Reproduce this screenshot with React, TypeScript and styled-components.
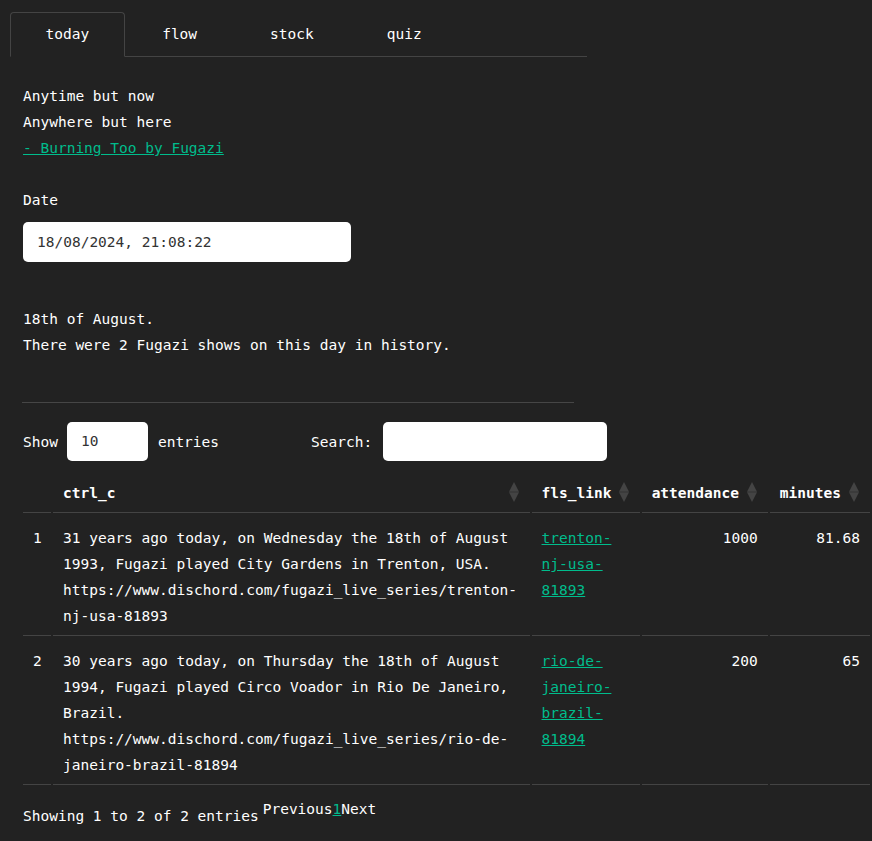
import styled, { createGlobalStyle } from "styled-components";

const GlobalStyle = createGlobalStyle`
  html, body {
    margin: 0;
    background: #222222;
    overflow-x: hidden;
  }
  body {
    font-family: "DejaVu Sans Mono", "Liberation Mono", monospace;
    font-size: 14.5px;
    line-height: 26px;
    color: #ffffff;
  }
`;

const Page = styled.div`
  padding: 12px 0 40px 10px;
`;

const TabBar = styled.ul`
  display: flex;
  width: 577px;
  margin: 0;
  padding: 0;
  list-style: none;
  border-bottom: 1px solid #444444;
`;

const Tab = styled.li<{ $active?: boolean }>`
  margin: 0 2px -1px 0;
  padding: 8px 34.5px 9px;
  border: 1px solid ${(p) => (p.$active ? "#444444" : "transparent")};
  border-bottom-color: transparent;
  border-radius: 4px 4px 0 0;
  background: ${(p) => (p.$active ? "#222222" : "transparent")};
  color: #ffffff;
  cursor: pointer;
`;

const Panel = styled.div`
  padding-left: 13px;
`;

const Quote = styled.p`
  margin: 26px 0 0;
`;

const Link = styled.a`
  color: #00bc8c;
  text-decoration: underline;
`;

const Label = styled.div`
  margin-top: 26px;
`;

const DateInput = styled.div`
  box-sizing: border-box;
  width: 328px;
  height: 40px;
  margin-top: 9px;
  padding: 7px 14px;
  background: #ffffff;
  border-radius: 5px;
  color: #333333;
`;

const Summary = styled.p`
  margin: 44px 0 0;
`;

const Rule = styled.hr`
  width: 552px;
  margin: 44px 0 0 -1px;
  border: 0;
  border-top: 1px solid #464646;
`;

const Controls = styled.div`
  display: flex;
  align-items: center;
  margin-top: 19px;
  height: 39px;
`;

const Box = styled.div<{ $width: number }>`
  box-sizing: border-box;
  width: ${(p) => p.$width}px;
  height: 39px;
  padding: 6px 14px;
  background: #ffffff;
  border-radius: 5px;
  color: #333333;
`;

const Gap = styled.span<{ $w: number }>`
  display: inline-block;
  width: ${(p) => p.$w}px;
`;

const Table = styled.table`
  margin-top: 17px;
  margin-left: -2px;
  border-spacing: 2px;
  table-layout: fixed;
  width: 913px;
`;

const Th = styled.th<{ $align?: string }>`
  position: relative;
  padding: 0 10px 6px;
  text-align: ${(p) => p.$align || "left"};
  font-weight: bold;
  border-bottom: 1px solid #444444;
`;

const Td = styled.td<{ $align?: string }>`
  padding: 10px 10px 6px;
  vertical-align: top;
  text-align: ${(p) => p.$align || "left"};
  border-bottom: 1px solid #444444;
`;

const SortIcon = styled.svg`
  position: absolute;
  right: 11px;
  top: 2px;
  width: 10px;
  height: 20px;
`;

const Footer = styled.div`
  display: flex;
  align-items: flex-start;
  gap: 4px;
  margin-top: 9px;
`;

const Info = styled.div`
  padding-top: 7px;
`;

const Pager = styled.div`
  display: flex;
`;

function Sort() {
  return (
    <SortIcon viewBox="0 0 10 20">
      <polygon points="5,0 10,9.8 0,9.8" fill="#444444" />
      <polygon points="0,10.2 10,10.2 5,20" fill="#444444" />
    </SortIcon>
  );
}

const shows = [
  {
    n: 1,
    text: "31 years ago today, on Wednesday the 18th of August 1993, Fugazi played City Gardens in Trenton, USA. https://www.dischord.com/fugazi_live_series/trenton-nj-usa-81893",
    link: "trenton-nj-usa-81893",
    attendance: "1000",
    minutes: "81.68",
  },
  {
    n: 2,
    text: "30 years ago today, on Thursday the 18th of August 1994, Fugazi played Circo Voador in Rio De Janeiro, Brazil. https://www.dischord.com/fugazi_live_series/rio-de-janeiro-brazil-81894",
    link: "rio-de-janeiro-brazil-81894",
    attendance: "200",
    minutes: "65",
  },
];

export default function App() {
  return (
    <Page>
      <GlobalStyle />
      <TabBar>
        <Tab $active>today</Tab>
        <Tab>flow</Tab>
        <Tab>stock</Tab>
        <Tab>quiz</Tab>
      </TabBar>

      <Panel>
        <Quote>
          Anytime but now
          <br />
          Anywhere but here
          <br />
          <Link href="#">- Burning Too by Fugazi</Link>
        </Quote>

        <Label>Date</Label>
        <DateInput>18/08/2024, 21:08:22</DateInput>

        <Summary>
          18th of August.
          <br />
          There were 2 Fugazi shows on this day in history.
        </Summary>

        <Rule />

        <Controls>
          <span>Show</span>
          <Gap $w={9} />
          <Box $width={81}>10</Box>
          <Gap $w={10} />
          <span>entries</span>
          <Gap $w={92} />
          <span>Search:</span>
          <Gap $w={11} />
          <Box $width={224} />
        </Controls>

        <Table>
          <colgroup>
            <col style={{ width: 28 }} />
            <col style={{ width: 476 }} />
            <col style={{ width: 108 }} />
            <col style={{ width: 126 }} />
            <col style={{ width: 100 }} />
            <col style={{ width: 60 }} />
          </colgroup>
          <thead>
            <tr>
              <Th />
              <Th>
                ctrl_c
                <Sort />
              </Th>
              <Th>
                fls_link
                <Sort />
              </Th>
              <Th>
                attendance
                <Sort />
              </Th>
              <Th>
                minutes
                <Sort />
              </Th>
              <Th />
            </tr>
          </thead>
          <tbody>
            {shows.map((s) => (
              <tr key={s.n}>
                <Td $align="right">{s.n}</Td>
                <Td>{s.text}</Td>
                <Td>
                  <Link href="#">{s.link}</Link>
                </Td>
                <Td $align="right">{s.attendance}</Td>
                <Td $align="right">{s.minutes}</Td>
                <Td />
              </tr>
            ))}
          </tbody>
        </Table>

        <Footer>
          <Info>Showing 1 to 2 of 2 entries</Info>
          <Pager>
            <span>Previous</span>
            <Link href="#">1</Link>
            <span>Next</span>
          </Pager>
        </Footer>
      </Panel>
    </Page>
  );
}
